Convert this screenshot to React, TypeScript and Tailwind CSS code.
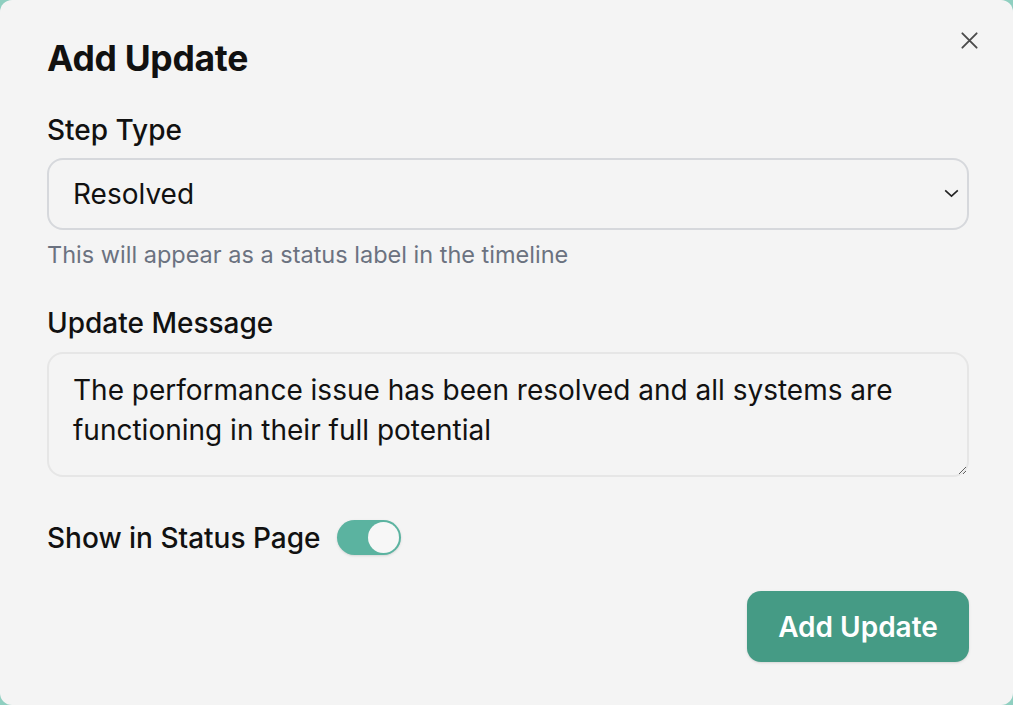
import { useState } from "react";

export default function App() {
  const [stepType, setStepType] = useState("Resolved");
  const [message, setMessage] = useState(
    "The performance issue has been resolved and all systems are functioning in their full potential"
  );
  const [showInStatus, setShowInStatus] = useState(true);

  return (
    <div className="w-[1013px] h-[705px] bg-[#8fcfc0]" style={{ fontFamily: "Inter, 'Noto Sans', sans-serif" }}>
      <div className="relative w-full h-full bg-[#f4f4f4] rounded-[12px] pl-[47px] pr-[44px] pt-[39px] flex flex-col text-[#111111]">
        <button className="absolute top-[31px] right-[34px] w-[19px] h-[19px] text-[#4b4b4b]">
          <svg viewBox="0 0 20 20" className="w-full h-full" fill="none" stroke="currentColor" strokeWidth="2" strokeLinecap="round">
            <path d="M2.5 2.5 L17.5 17.5 M17.5 2.5 L2.5 17.5" />
          </svg>
        </button>

        <h1 className="text-[35.5px] leading-[40px] font-bold tracking-[-0.3px]">Add Update</h1>

        <label className="mt-[35px] text-[28px] leading-[32px] font-medium">Step Type</label>
        <div className="relative mt-[12px]">
          <select
            value={stepType}
            onChange={(e) => setStepType(e.target.value)}
            className="appearance-none w-full h-[72px] rounded-[16px] border-2 border-[#d6d8dc] bg-[#f4f4f4] pl-[24px] text-[28px] outline-none"
          >
            <option>Investigating</option>
            <option>Identified</option>
            <option>Monitoring</option>
            <option>Resolved</option>
          </select>
          <svg
            viewBox="0 0 16 10"
            className="pointer-events-none absolute right-[10px] top-[31px] w-[15px] h-[9px] text-[#222]"
            fill="none"
            stroke="currentColor"
            strokeWidth="1.8"
          >
            <path d="M1 1.5 L8 8 L15 1.5" />
          </svg>
        </div>
        <p className="mt-[11px] text-[23.5px] leading-[28px] text-[#6b7280]">
          This will appear as a status label in the timeline
        </p>

        <label className="mt-[38px] text-[28px] leading-[32px] font-medium">Update Message</label>
        <textarea
          value={message}
          onChange={(e) => setMessage(e.target.value)}
          className="mt-[13px] h-[125px] w-full rounded-[16px] border-2 border-[#e6e6e6] bg-[#f4f4f4] px-[24px] pt-[16px] text-[28px] leading-[40px] outline-none"
        />

        <div className="mt-[43px] flex items-center gap-[16px]">
          <span className="text-[28px] leading-[32px] font-medium">Show in Status Page</span>
          <button
            onClick={() => setShowInStatus(!showInStatus)}
            className={`w-[64px] h-[35px] rounded-full p-[2px] flex items-center shadow-sm ${
              showInStatus ? "bg-[#5bb3a0] justify-end" : "bg-[#d1d5db] justify-start"
            }`}
          >
            <span className="w-[31px] h-[31px] rounded-full bg-[#f7f7f7]" />
          </button>
        </div>

        <div className="mt-[36px] flex justify-end">
          <button className="w-[222px] h-[71px] rounded-[14px] bg-[#459b85] text-white text-[28px] font-semibold shadow-sm">
            Add Update
          </button>
        </div>
      </div>
    </div>
  );
}
